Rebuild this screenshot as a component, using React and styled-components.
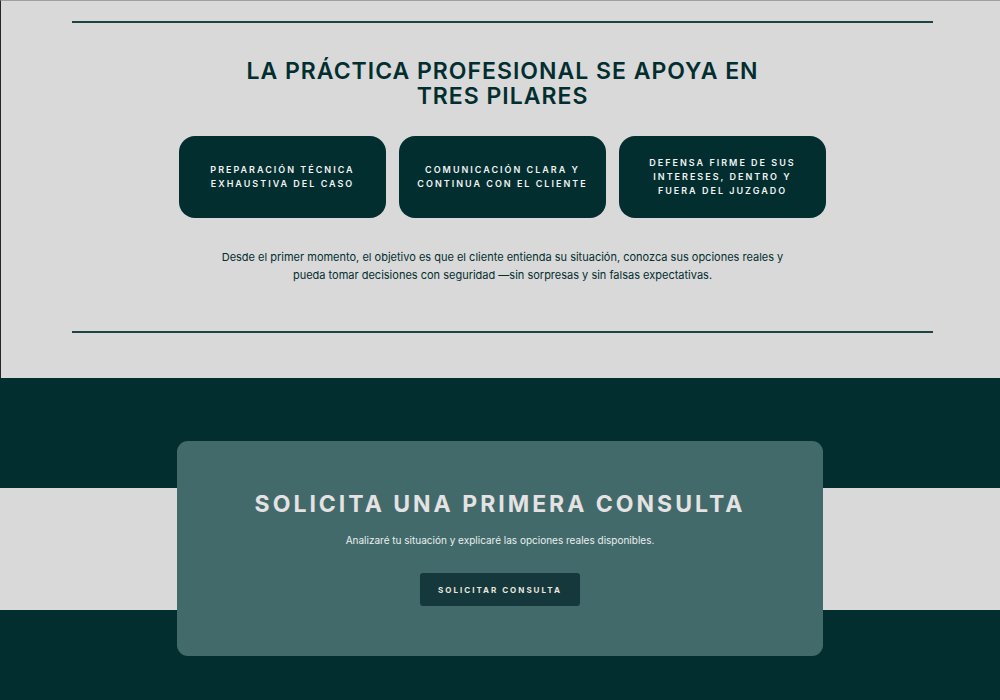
import styled, { createGlobalStyle } from "styled-components";

const GlobalStyle = createGlobalStyle`
	* {
		box-sizing: border-box;
	}

	body {
		margin: 0;
		background-color: #032e2f;
		font-family: Inter, "Liberation Sans", sans-serif;
	}
`;

const Practice = styled.section`
	padding: 20px 67px 45px 71px;
	background-color: #d9d9d9;
	border-top: 1px solid #9a9f9f;
	border-left: 1px solid #242628;
`;

const Frame = styled.div`
	padding: 36px 20px 47px;
	display: flex;
	flex-direction: column;
	align-items: center;
	border-top: 2px solid #1c4445;
	border-bottom: 2px solid #1c4445;
	color: #032e2f;
	text-align: center;
`;

const Title = styled.h2`
	max-width: 560px;
	margin: 0;
	font-size: 23px;
	font-weight: 600;
	line-height: 25px;
	letter-spacing: 1px;
	text-transform: uppercase;
`;

const Pillars = styled.ul`
	width: 100%;
	max-width: 647px;
	margin: 27px 0 30px;
	padding: 0;
	display: grid;
	grid-template-columns: repeat(3, 1fr);
	gap: 13px;
	list-style: none;
`;

const Pillar = styled.li`
	min-height: 82px;
	padding: 18px;
	display: flex;
	align-items: center;
	justify-content: center;
	border-radius: 16px;
	background-color: #032e2f;
	color: #f1f4f3;
	font-size: 9px;
	font-weight: 600;
	line-height: 14px;
	letter-spacing: 2px;
	text-transform: uppercase;
`;

const Desc = styled.p`
	max-width: 580px;
	margin: 0;
	font-size: 11px;
	line-height: 18px;
`;

const Contact = styled.section`
	padding: 63px 20px 44px;
	display: flex;
	justify-content: center;
	background: linear-gradient(
		#032e2f 110px,
		#d9d9d9 110px,
		#d9d9d9 232px,
		#032e2f 232px
	);
`;

const Card = styled.div`
	width: 100%;
	max-width: 646px;
	padding: 50px 20px;
	display: flex;
	flex-direction: column;
	align-items: center;
	border-radius: 11px;
	background-color: #436a6b;
	text-align: center;
`;

const CardTitle = styled.h2`
	margin: 0;
	color: #e5e2e3;
	font-size: 23px;
	font-weight: 700;
	line-height: 26px;
	letter-spacing: 3px;
	text-transform: uppercase;
`;

const CardText = styled.p`
	margin: 14px 0 24px;
	color: #e9efee;
	font-size: 10px;
	line-height: 18px;
`;

const Button = styled.button`
	height: 33px;
	padding: 0 18px;
	border: none;
	border-radius: 3px;
	background-color: #14383b;
	color: #ece6df;
	font-family: inherit;
	font-size: 8px;
	font-weight: 700;
	letter-spacing: 2px;
	text-transform: uppercase;
	cursor: pointer;
`;

const pillars = [
	"Preparación técnica exhaustiva del caso",
	"Comunicación clara y continua con el cliente",
	"Defensa firme de sus intereses, dentro y fuera del juzgado",
];

const App = () => {
	return (
		<>
			<GlobalStyle />
			<main>
				<Practice>
					<Frame>
						<Title>La práctica profesional se apoya en tres pilares</Title>
						<Pillars>
							{pillars.map((item) => (
								<Pillar key={item}>{item}</Pillar>
							))}
						</Pillars>
						<Desc>
							Desde el primer momento, el objetivo es que el cliente entienda su
							situación, conozca sus opciones reales y pueda tomar decisiones
							con seguridad —sin sorpresas y sin falsas expectativas.
						</Desc>
					</Frame>
				</Practice>
				<Contact>
					<Card>
						<CardTitle>Solicita una primera consulta</CardTitle>
						<CardText>
							Analizaré tu situación y explicaré las opciones reales
							disponibles.
						</CardText>
						<Button type="button">Solicitar consulta</Button>
					</Card>
				</Contact>
			</main>
		</>
	);
};

export default App;
